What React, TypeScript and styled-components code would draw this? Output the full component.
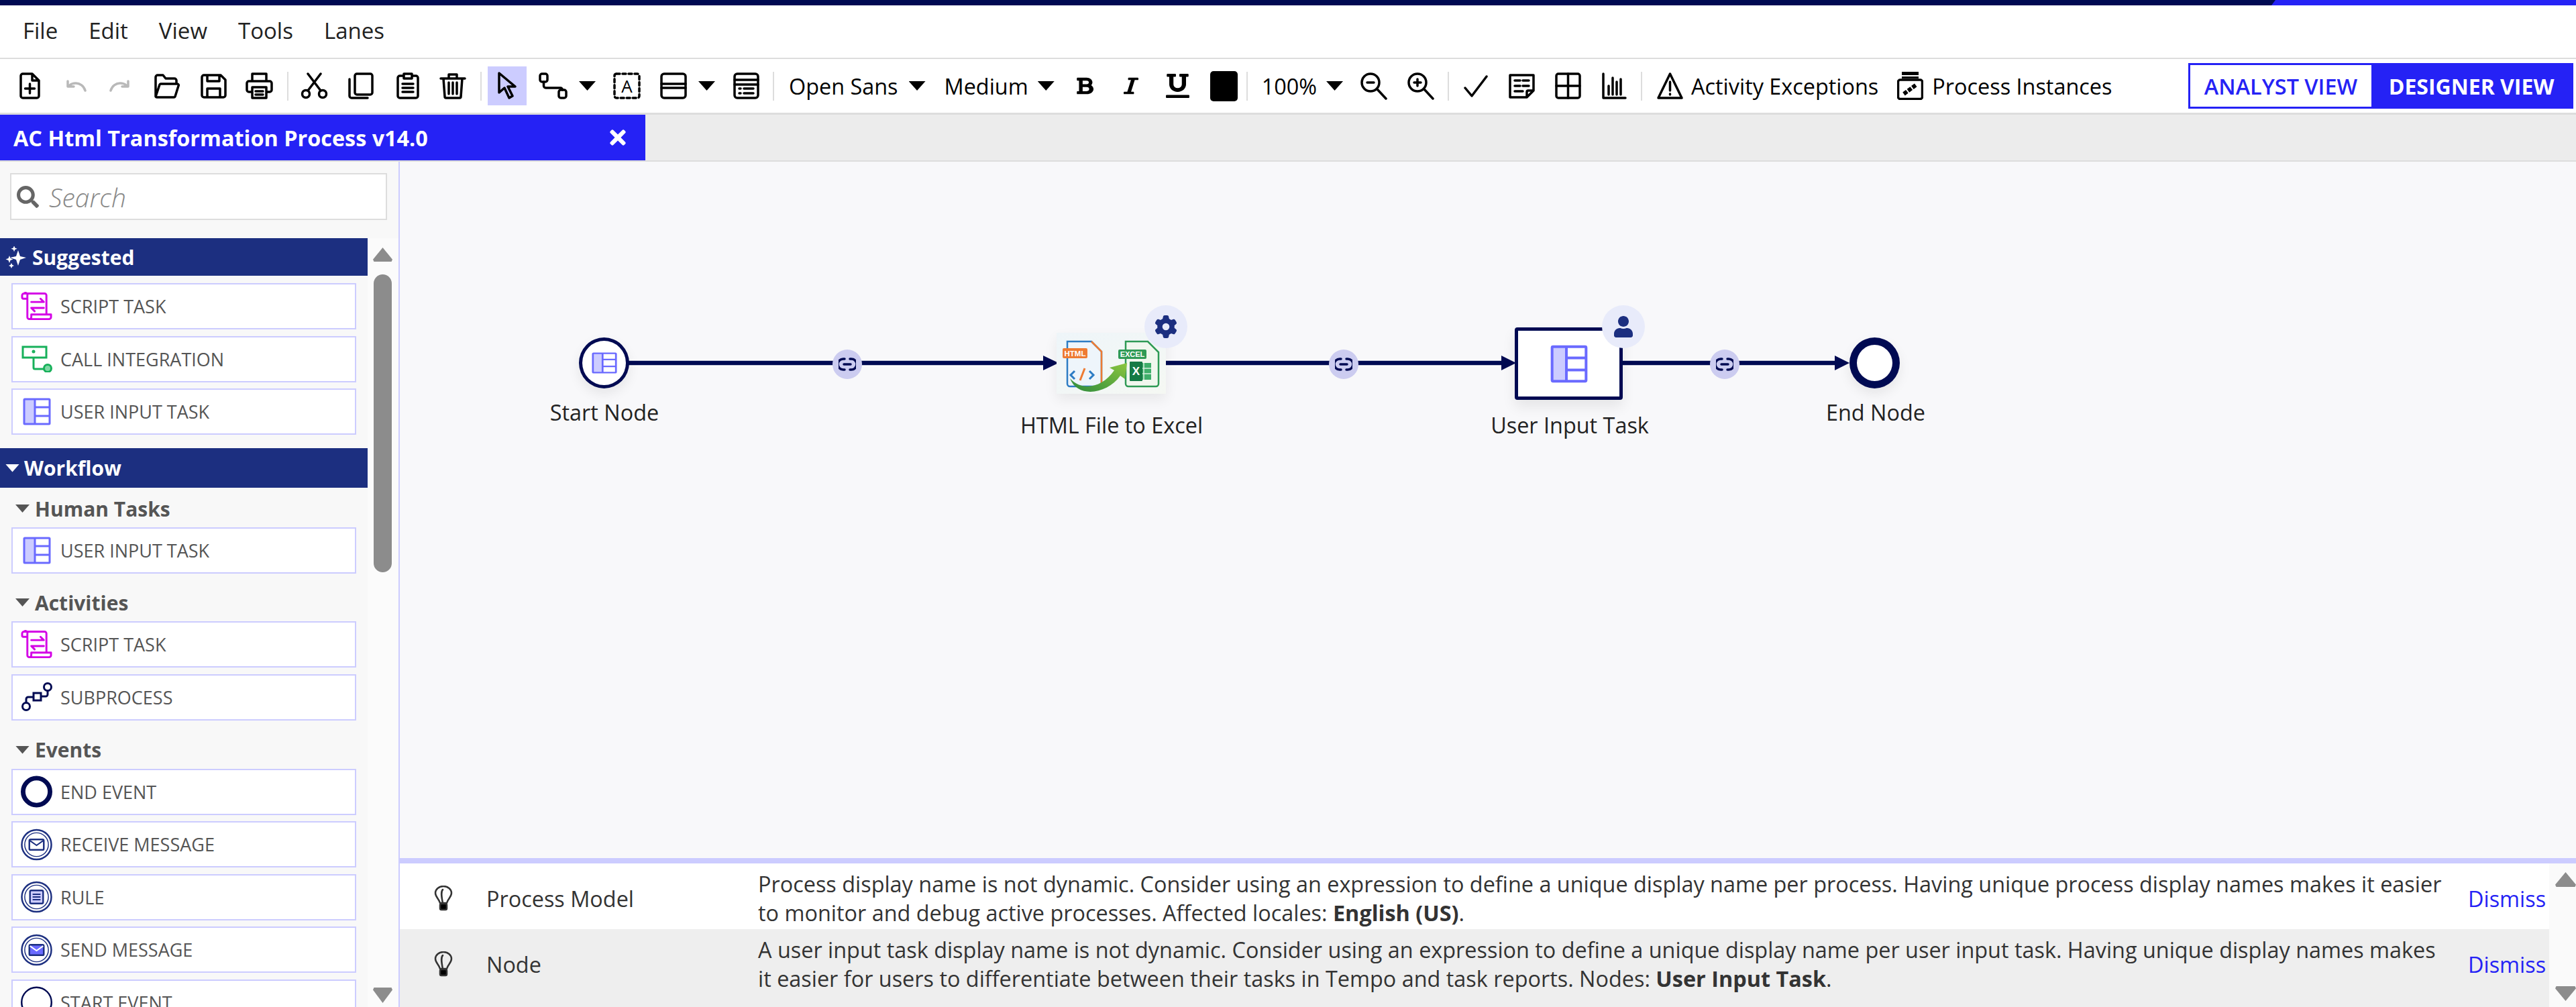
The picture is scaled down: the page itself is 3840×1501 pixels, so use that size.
import React from 'react';
import styled, { createGlobalStyle } from 'styled-components';
import { FaBold, FaItalic, FaUnderline, FaSearch, FaUser, FaTimes } from 'react-icons/fa';
import { FaGear } from 'react-icons/fa6';

const NAVY = '#000a52';
const BLUE = '#2522f5';
const SECTION = '#1c2f80';
const LILAC = '#ccccff';
const ICON_BLUE = '#6a6aff';

const GlobalStyle = createGlobalStyle`
  html, body {
    margin: 0;
    padding: 0;
    background: #fff;
    overflow: hidden;
  }
  * {
    box-sizing: border-box;
  }
`;

const Page = styled.div`
  width: 3840px;
  height: 1501px;
  display: flex;
  flex-direction: column;
  overflow: hidden;
  font-family: 'Open Sans', 'Noto Sans', sans-serif;
  font-size: 32.4px;
  color: #222;
`;

const TopStrip = styled.div`
  height: 8px;
  flex-shrink: 0;
  background: ${NAVY};
  display: flex;
  justify-content: flex-end;
`;

const TopAccent = styled.div`
  width: 454px;
  background: ${BLUE};
  clip-path: polygon(6px 0, 100% 0, 100% 100%, 0 100%);
`;

const MenuBar = styled.div`
  height: 80px;
  flex-shrink: 0;
  display: flex;
  align-items: center;
  gap: 46px;
  padding: 0 0 3px 34px;
  background: #fff;
  border-bottom: 2px solid #ddd;
  font-size: 33px;
`;

const Toolbar = styled.div`
  height: 83px;
  flex-shrink: 0;
  display: flex;
  align-items: center;
  padding: 0 4px 0 29px;
  background: #fff;
  border-bottom: 3px solid #ddd;
`;

const Tool = styled.div<{ $gap?: number; $muted?: boolean }>`
  display: flex;
  align-items: center;
  justify-content: center;
  flex-shrink: 0;
  margin-left: ${(p) => p.$gap ?? 0}px;
  color: ${(p) => (p.$muted ? '#b9b9b9' : '#000')};
  white-space: nowrap;
`;

const SelectedTool = styled(Tool)`
  width: 58px;
  height: 58px;
  background: ${LILAC};
`;

const Divider = styled.div<{ $gap: number }>`
  width: 2px;
  height: 43px;
  flex-shrink: 0;
  margin-left: ${(p) => p.$gap}px;
  background: #ddd;
`;

const Caret = styled.div<{ $gap: number }>`
  width: 25px;
  height: 14px;
  flex-shrink: 0;
  margin-left: ${(p) => p.$gap}px;
  background: #000;
  clip-path: polygon(0 0, 100% 0, 50% 100%);
`;

const Swatch = styled.div<{ $gap: number }>`
  width: 41px;
  height: 45px;
  flex-shrink: 0;
  margin-left: ${(p) => p.$gap}px;
  border-radius: 5px;
  background: #000;
`;

const BoldGlyph = styled(FaBold)`
  width: 26px;
  height: 28px;
`;

const ItalicGlyph = styled(FaItalic)`
  width: 22px;
  height: 28px;
`;

const UnderlineGlyph = styled(FaUnderline)`
  width: 35px;
  height: 36px;
`;

const ViewToggle = styled.div`
  margin-left: auto;
  width: 574px;
  height: 68px;
  display: flex;
  border: 3px solid ${BLUE};
`;

const ViewOption = styled.div<{ $active?: boolean }>`
  flex: ${(p) => (p.$active ? '0 0 298px' : '1')};
  display: flex;
  align-items: center;
  justify-content: center;
  font-size: ${(p) => (p.$active ? 32 : 32.4)}px;
  font-weight: ${(p) => (p.$active ? 700 : 600)};
  background: ${(p) => (p.$active ? BLUE : '#fff')};
  color: ${(p) => (p.$active ? '#fff' : BLUE)};
`;

const TabRow = styled.div`
  height: 70px;
  flex-shrink: 0;
  background: #ececec;
  border-bottom: 2px solid #ddd;
`;

const Tab = styled.div`
  width: 962px;
  height: 68px;
  display: flex;
  align-items: center;
  justify-content: space-between;
  padding: 0 24px 0 20px;
  background: ${BLUE};
  color: #fff;
  font-weight: 700;
`;

const Main = styled.div`
  flex: 1;
  min-height: 0;
  display: flex;
`;

const Sidebar = styled.div`
  width: 596px;
  flex-shrink: 0;
  display: flex;
  flex-direction: column;
  background: #f8f8f8;
  border-right: 2px solid ${LILAC};
  overflow: hidden;
`;

const SearchWrap = styled.div`
  padding: 17px 17px 27px 15px;
  flex-shrink: 0;
`;

const SearchBox = styled.div`
  height: 70px;
  display: flex;
  align-items: center;
  gap: 15px;
  padding-left: 8px;
  background: #fff;
  border: 2px solid #ddd;
  color: #666;
`;

const SearchText = styled.span`
  font-size: 39px;
  font-style: italic;
  font-weight: 300;
  color: #888;
`;

const SideBody = styled.div`
  flex: 1;
  min-height: 0;
  display: flex;
`;

const Palette = styled.div`
  width: 548px;
  flex-shrink: 0;
`;

const SectionHeader = styled.div<{ $tall?: boolean; $top?: number }>`
  height: ${(p) => (p.$tall ? 59 : 56)}px;
  margin-top: ${(p) => p.$top ?? 0}px;
  display: flex;
  align-items: center;
  gap: 7px;
  padding-left: 8px;
  background: ${SECTION};
  color: #fff;
  font-size: 30px;
  font-weight: 700;
`;

const SectionCaret = styled.div<{ $dark?: boolean }>`
  width: 21px;
  height: 12px;
  flex-shrink: 0;
  background: ${(p) => (p.$dark ? '#555' : '#fff')};
  clip-path: polygon(0 0, 100% 0, 50% 100%);
`;

const GroupTitle = styled.div<{ $top: number }>`
  height: 50px;
  margin: ${(p) => p.$top}px 0 3px;
  display: flex;
  align-items: center;
  gap: 8px;
  padding-left: 23px;
  font-size: 30px;
  font-weight: 700;
  color: #555;
`;

const ItemList = styled.div<{ $top?: number }>`
  display: flex;
  flex-direction: column;
  gap: 9.5px;
  padding: ${(p) => p.$top ?? 0}px 17px 0;
`;

const PaletteItem = styled.div`
  height: 69px;
  flex-shrink: 0;
  display: flex;
  align-items: center;
  gap: 12px;
  padding-left: 12px;
  background: #fff;
  border: 2px solid ${LILAC};
  font-size: 27px;
  color: #555;
`;

const ItemIcon = styled.div`
  width: 47px;
  flex-shrink: 0;
  display: flex;
  justify-content: center;
`;

const Rail = styled.div`
  flex: 1;
  position: relative;
  background: #fbfbfb;
`;

const RailUp = styled.div`
  position: absolute;
  left: 8px;
  top: 14px;
  width: 29px;
  height: 21px;
  background: #8c8c8c;
  clip-path: polygon(50% 0, 100% 85%, 95% 100%, 5% 100%, 0 85%);
`;

const RailThumb = styled.div`
  position: absolute;
  left: 9px;
  top: 54px;
  width: 27px;
  height: 444px;
  border-radius: 14px;
  background: #8c8c8c;
`;

const RailDown = styled.div`
  position: absolute;
  left: 8px;
  top: 1117px;
  width: 29px;
  height: 23px;
  background: #8c8c8c;
  clip-path: polygon(5% 0, 95% 0, 100% 15%, 50% 100%, 0 15%);
`;

const Content = styled.div`
  flex: 1;
  min-width: 0;
  display: flex;
  flex-direction: column;
`;

const Canvas = styled.div`
  flex: 1;
  position: relative;
  background: #f8f8fa;
  overflow: hidden;
`;

const Wires = styled.svg`
  position: absolute;
  left: 0;
  top: 0;
`;

const EventNode = styled.div<{ $x: number; $y: number; $ring: number }>`
  position: absolute;
  left: ${(p) => p.$x}px;
  top: ${(p) => p.$y}px;
  width: 75px;
  height: 76px;
  display: flex;
  align-items: center;
  justify-content: center;
  background: #fff;
  border: ${(p) => p.$ring}px solid ${NAVY};
  border-radius: 50%;
  box-shadow: 0 8px 18px rgba(0, 0, 0, 0.08);
`;

const TaskNode = styled.div<{ $x: number; $y: number }>`
  position: absolute;
  left: ${(p) => p.$x}px;
  top: ${(p) => p.$y}px;
  width: 161px;
  height: 108px;
  display: flex;
  align-items: center;
  justify-content: center;
  background: #fff;
  border: 5px solid ${NAVY};
  border-radius: 4px;
  box-shadow: 0 10px 20px rgba(0, 0, 0, 0.08);
`;

const PictureNode = styled.div<{ $x: number; $y: number }>`
  position: absolute;
  left: ${(p) => p.$x}px;
  top: ${(p) => p.$y}px;
  width: 163px;
  height: 91px;
  box-shadow: 0 8px 18px rgba(0, 0, 0, 0.07);
`;

const Badge = styled.div<{ $x: number; $y: number }>`
  position: absolute;
  left: ${(p) => p.$x}px;
  top: ${(p) => p.$y}px;
  width: 64px;
  height: 64px;
  display: flex;
  align-items: center;
  justify-content: center;
  border-radius: 50%;
  background: #e8ebfa;
  color: ${SECTION};
`;

const LinkChip = styled.div<{ $x: number }>`
  position: absolute;
  left: ${(p) => p.$x}px;
  top: 280px;
  width: 44px;
  height: 44px;
  display: flex;
  align-items: center;
  justify-content: center;
  border-radius: 50%;
  background: #ccccf0;
`;

const NodeLabel = styled.div<{ $x: number; $y: number }>`
  position: absolute;
  left: ${(p) => p.$x}px;
  top: ${(p) => p.$y}px;
  transform: translateX(-50%);
  line-height: 44px;
  white-space: nowrap;
`;

const Panel = styled.div`
  height: 222px;
  flex-shrink: 0;
  display: flex;
  border-top: 8px solid ${LILAC};
  overflow: hidden;
`;

const PanelRows = styled.div`
  flex: 1;
  min-width: 0;
`;

const PanelRow = styled.div<{ $shaded?: boolean; $height: number }>`
  height: ${(p) => p.$height}px;
  display: flex;
  align-items: flex-start;
  padding-top: 9px;
  background: ${(p) => (p.$shaded ? '#eee' : '#fff')};
  color: #333;
`;

const Bulb = styled.div`
  width: 129px;
  height: 86px;
  flex-shrink: 0;
  padding-left: 51px;
  display: flex;
  align-items: center;
`;

const Kind = styled.div`
  width: 405px;
  flex-shrink: 0;
  line-height: 86px;
`;

const Message = styled.div`
  width: 2520px;
  margin-right: 29px;
  flex-shrink: 0;
  line-height: 43px;
`;

const Dismiss = styled.div`
  line-height: 86px;
  color: ${BLUE};
`;

const PanelRail = styled.div`
  width: 40px;
  flex-shrink: 0;
  position: relative;
  background: #fafafa;
`;

const PanelRailUp = styled(RailUp)`
  left: 9px;
  top: 13px;
  width: 31px;
  height: 22px;
`;

const PanelRailDown = styled(RailDown)`
  left: 9px;
  top: 183px;
  width: 31px;
  height: 22px;
`;

const Stroke = styled.svg`
  display: block;
  fill: none;
  stroke: currentColor;
  stroke-width: 3.5;
  stroke-linecap: round;
  stroke-linejoin: round;
`;

const NewIcon = () => (
  <Stroke width={31} height={40} viewBox="0 0 31 40">
    <path d="M5 2h14l10 10v23a3 3 0 0 1-3 3H5a3 3 0 0 1-3-3V5a3 3 0 0 1 3-3zM19 2v10h10M15.500 17v14M8.500 24h14" />
  </Stroke>
);

const UndoIcon = ({ flip }: { flip?: boolean }) => (
  <Stroke width={34} height={18} viewBox="0 0 34 18" transform={flip ? 'scale(-1 1)' : undefined}>
    <path d="M31 16c-2-7-8-11-14-11-4 0-7 1-9 3M5 2v8h9" />
  </Stroke>
);

const FolderIcon = () => (
  <Stroke width={38} height={37} viewBox="0 0 38 37">
    <path d="M2 33V5a3 3 0 0 1 3-3h8l4 5h13a3 3 0 0 1 3 3v5M2 34l6-18a2 2 0 0 1 2-1h24a2 2 0 0 1 2 3l-5 16a2 2 0 0 1-2 1H4a2 2 0 0 1-2-1z" />
  </Stroke>
);

const SaveIcon = () => (
  <Stroke width={39} height={37} viewBox="0 0 39 37">
    <path d="M5 2h25l7 7v23a3 3 0 0 1-3 3H5a3 3 0 0 1-3-3V5a3 3 0 0 1 3-3zM10 2v9h18V2M10 35V22h19v13" />
  </Stroke>
);

const PrintIcon = () => (
  <Stroke width={41} height={40} viewBox="0 0 41 40">
    <path d="M10 13V2h21v11M10 29H5a3 3 0 0 1-3-3V16a3 3 0 0 1 3-3h31a3 3 0 0 1 3 3v10a3 3 0 0 1-3 3h-5M10 22h21v16H10zM15 28h11M15 33h11" />
  </Stroke>
);

const CutIcon = () => (
  <Stroke width={41} height={40} viewBox="0 0 41 40">
    <circle cx="8" cy="32" r="5.500" />
    <circle cx="33" cy="32" r="5.500" />
    <path d="M11 27L30 2M30 27L11 2" />
  </Stroke>
);

const CopyIcon = () => (
  <Stroke width={38} height={40} viewBox="0 0 38 40">
    <path d="M10 30V5a3 3 0 0 1 3-3h20a3 3 0 0 1 3 3v25a3 3 0 0 1-3 3H13a3 3 0 0 1-3-3zM2 10v25a3 3 0 0 0 3 3h24" />
  </Stroke>
);

const PasteIcon = () => (
  <Stroke width={34} height={40} viewBox="0 0 34 40">
    <path d="M11 5H5a3 3 0 0 0-3 3v27a3 3 0 0 0 3 3h24a3 3 0 0 0 3-3V8a3 3 0 0 0-3-3h-6M11 2h12v7H11zM9 17h16M9 23h16M9 29h16" />
  </Stroke>
);

const TrashIcon = () => (
  <Stroke width={40} height={40} viewBox="0 0 40 40">
    <path d="M2 9h36M14 9V3h12v6M6 9l2 27a2 2 0 0 0 2 2h20a2 2 0 0 0 2-2l2-27M14 15v17M20 15v17M26 15v17" />
  </Stroke>
);

const PointerIcon = () => (
  <Stroke width={31} height={42} viewBox="0 0 31 42">
    <path d="M3 2v29l8-7 7 15 5-3-7-14h11z" />
  </Stroke>
);

const ConnectorIcon = () => (
  <Stroke width={43} height={40} viewBox="0 0 43 40">
    <rect x="2" y="2" width="11" height="12" rx="3" />
    <rect x="30" y="26" width="11" height="12" rx="3" />
    <path d="M7.500 14v6a3 3 0 0 0 3 3h22a3 3 0 0 1 3 3" />
  </Stroke>
);

const TextBoxIcon = () => (
  <Stroke width={41} height={40} viewBox="0 0 41 40">
    <rect x="2" y="2" width="37" height="36" rx="3" strokeDasharray="5 4" />
    <text x="20.500" y="30" textAnchor="middle" fontSize="26" fill="#000" stroke="none" fontFamily="Open Sans">
      A
    </text>
  </Stroke>
);

const LanesIcon = () => (
  <Stroke width={40} height={40} viewBox="0 0 40 40">
    <rect x="2" y="2" width="36" height="36" rx="4" />
    <path d="M2 17h36M2 23h36" />
  </Stroke>
);

const FormIcon = () => (
  <Stroke width={39} height={40} viewBox="0 0 39 40">
    <rect x="2" y="2" width="35" height="36" rx="4" />
    <path d="M2 11h35M2 18h35M9 24h2M16 24h14M9 31h2M16 31h14" />
  </Stroke>
);

const ZoomIcon = ({ plus }: { plus?: boolean }) => (
  <Stroke width={40} height={41} viewBox="0 0 40 41">
    <ellipse cx="15" cy="15" rx="13" ry="13" />
    <path d={plus ? 'M25 25l13 14M10 15h10M15 10v10' : 'M25 25l13 14M10 15h10'} />
  </Stroke>
);

const CheckIcon = () => (
  <Stroke width={36} height={33} viewBox="0 0 36 33">
    <path d="M2 19l10 12L34 2" />
  </Stroke>
);

const NoteIcon = () => (
  <Stroke width={39} height={37} viewBox="0 0 39 37">
    <path d="M2 2h35v23l-10 10H2zM27 35v-8a2 2 0 0 1 2-2h8M9 10h8M21 10h9M9 18h8M21 18h9M9 26h12" />
  </Stroke>
);

const GridIcon = () => (
  <Stroke width={39} height={40} viewBox="0 0 39 40">
    <rect x="2" y="2" width="35" height="36" rx="3" />
    <path d="M19.500 2v36M2 20h35" />
  </Stroke>
);

const ChartIcon = () => (
  <Stroke width={37} height={40} viewBox="0 0 37 40">
    <path d="M2 2v36h33M10 20v13M16 8v25M22 14v19M28 10v23" />
  </Stroke>
);

const WarnIcon = () => (
  <Stroke width={39} height={40} viewBox="0 0 39 40">
    <path d="M19.500 2L37 38H2zM19.500 14v13M19.500 32v1" />
  </Stroke>
);

const InstancesIcon = () => (
  <svg width="39" height="42" viewBox="0 0 39 42" style={{ display: 'block' }}>
    <rect x="7" y="0" width="25" height="5" fill="#000" />
    <rect x="7" y="7" width="25" height="3" fill="#000" />
    <rect x="1.500" y="12" width="36" height="28.500" rx="3" fill="#fff" stroke="#000" strokeWidth="3.500" />
    <path d="M10 33l19-14" stroke="#000" strokeWidth="6" strokeDasharray="6 2" />
  </svg>
);

const BulbIcon = () => (
  <Stroke width={28} height={38} viewBox="0 0 28 38" style={{ strokeWidth: 2.5 }}>
    <path d="M9 26C7 19 2 17 2 11a12 10 0 0 1 24 0c0 6-5 8-7 15zM13 6c-3 3-2 10 0 20" />
    <rect x="9" y="27" width="10" height="9" rx="2" fill="#000" />
  </Stroke>
);

const SparkleIcon = () => (
  <svg width="33" height="33" viewBox="0 0 33 33" fill="#fff" style={{ display: 'block' }}>
    <path d="M19 6l3 9 9 2-9 3-3 9-3-9-9-3 9-2z" />
    <path d="M13 0l1.500 4 4 1.500-4 1.500-1.500 4-1.500-4-4-1.500 4-1.500z" transform="translate(2 -1) scale(.85)" />
    <path d="M8 12l1.500 4 4 1.500-4 1.500L8 23l-1.500-4-4-1.500 4-1.500z" transform="translate(-2 2)" />
    <path d="M9 25l1.300 2.700L13 29l-2.700 1.300L9 33l-1.300-2.700L5 29l2.700-1.300z" />
  </svg>
);

const ScriptIcon = () => (
  <svg width="48" height="43" viewBox="0 0 48 43" fill="none" stroke="#d400e6" strokeWidth="3" strokeLinejoin="round" strokeLinecap="round">
    <path d="M5 2h31a3 3 0 0 1 3 3v28M5 2a3 3 0 0 0-3 3v3a2 2 0 0 0 2 2h6V5a3 3 0 0 0-5-3zM10 10v28a3 3 0 0 0 6 0v-4h30v4a3 3 0 0 1-3 3H13" />
    <path d="M16 15h19l-5-5M35 24H16l5 5" />
  </svg>
);

const IntegrationIcon = () => (
  <svg width="46" height="40" viewBox="0 0 46 40" fill="none" stroke="#17b05a" strokeWidth="3">
    <rect x="2" y="2" width="35" height="16" />
    <circle cx="18" cy="9" r="1" fill="#17b05a" />
    <path d="M18 18v15a2 2 0 0 0 2 2h14" />
    <circle cx="39" cy="34" r="5.500" fill="#7fd8a5" />
  </svg>
);

const InputIcon = ({ w = 42, h = 41 }: { w?: number; h?: number }) => (
  <svg width={w} height={h} viewBox="0 0 42 41" preserveAspectRatio="none" fill="none">
    <rect x="2" y="2" width="16" height="37" fill={LILAC} />
    <rect x="2" y="2" width="38" height="37" stroke={ICON_BLUE} strokeWidth="3" rx="1" />
    <path d="M18 2v37M18 14h22M18 27h22" stroke={ICON_BLUE} strokeWidth="3" />
  </svg>
);

const SubprocessIcon = () => (
  <svg width="46" height="44" viewBox="0 0 46 44" fill="none" stroke={NAVY} strokeWidth="3">
    <circle cx="7" cy="36" r="5.500" />
    <path d="M7 30v-5a3 3 0 0 1 3-3h8" />
    <rect x="18" y="16" width="11" height="11" />
    <path d="M29 21h7a3 3 0 0 0 3-3v-5" />
    <circle cx="39" cy="7" r="5.500" />
  </svg>
);

const RingIcon = ({ children }: { children?: React.ReactNode }) => (
  <svg width="48" height="48" viewBox="0 0 48 48" fill="none" stroke={SECTION}>
    <circle cx="24" cy="24" r="22.500" strokeWidth="2.500" />
    <circle cx="24" cy="24" r="18" strokeWidth="1.500" />
    {children}
  </svg>
);

const PlainRing = ({ width }: { width: number }) => (
  <svg width="48" height="48" viewBox="0 0 48 48" fill="none" stroke={NAVY}>
    <circle cx="24" cy="24" r={24 - width / 2} strokeWidth={width} />
  </svg>
);

const LinkGlyph = () => (
  <svg width="26" height="22" viewBox="0 0 26 22" fill="none" stroke={NAVY} strokeWidth="3.500" strokeLinecap="round">
    <path d="M9 3H7a8 8 0 0 0 0 16h2M17 3h2a8 8 0 0 1 0 16h-2M8 11h10" />
  </svg>
);

const HtmlToExcel = () => (
  <svg width="163" height="91" viewBox="0 0 163 91" style={{ display: 'block' }}>
    <defs>
      <linearGradient id="pic" x1="0" y1="0" x2="1" y2="1">
        <stop offset="0" stopColor="#eef5f9" />
        <stop offset="1" stopColor="#f5f8f3" />
      </linearGradient>
      <linearGradient id="swoosh" x1="0" y1="1" x2="1" y2="0">
        <stop offset="0" stopColor="#2e8b3d" />
        <stop offset="1" stopColor="#8cc63f" />
      </linearGradient>
    </defs>
    <rect width="163" height="91" fill="url(#pic)" />
    <path d="M16 13h36l15 15v52H20a4 4 0 0 1-4-4z" fill="#eef5fb" stroke="#2d7cc4" strokeWidth="2.500" />
    <path d="M52 13l15 15v52" fill="none" stroke="#ee7b32" strokeWidth="2.500" />
    <rect x="9" y="23" width="37" height="15" rx="2" fill="#ee7b32" />
    <text x="27.500" y="35" fontFamily="Liberation Sans" fontSize="11.500" fontWeight="700" fill="#fff" textAnchor="middle">
      HTML
    </text>
    <path d="M27 57l-6 6 6 6M49 57l6 6-6 6" fill="none" stroke="#2d7cc4" strokeWidth="3" />
    <path d="M42 53l-7 18" stroke="#ee7b32" strokeWidth="3" />
    <path d="M103 13h33l16 16v47a4 4 0 0 1-4 4h-41a4 4 0 0 1-4-4z" fill="#f1f7ee" stroke="#2f9a55" strokeWidth="2.500" />
    <rect x="92" y="25" width="42" height="14" rx="2" fill="#2f9a55" />
    <text x="113" y="36" fontFamily="Liberation Sans" fontSize="11" fontWeight="700" fill="#fff" textAnchor="middle">
      EXCEL
    </text>
    <rect x="118" y="45" width="23" height="25" fill="#3fae6a" />
    <path d="M118 53h23M118 61h23M130 45v25" stroke="#d7efe0" strokeWidth="1.500" />
    <rect x="109" y="43" width="19" height="29" rx="1" fill="#157a45" />
    <text x="118.500" y="63" fontFamily="Liberation Sans" fontSize="17" fontWeight="700" fill="#fff" textAnchor="middle">
      X
    </text>
    <path d="M20 68c18 20 48 14 66-12l-7-4 26-7-3 24-7-5c-20 28-64 34-75 4z" fill="url(#swoosh)" />
  </svg>
);

const App: React.FC = () => {
  return (
    <Page>
      <GlobalStyle />
      <TopStrip>
        <TopAccent />
      </TopStrip>
      <MenuBar>
        <span>File</span>
        <span>Edit</span>
        <span>View</span>
        <span>Tools</span>
        <span>Lanes</span>
      </MenuBar>
      <Toolbar>
        <Tool><NewIcon /></Tool>
        <Tool $gap={36} $muted><UndoIcon /></Tool>
        <Tool $gap={32} $muted><UndoIcon flip /></Tool>
        <Tool $gap={34}><FolderIcon /></Tool>
        <Tool $gap={31}><SaveIcon /></Tool>
        <Tool $gap={28}><PrintIcon /></Tool>
        <Divider $gap={21} />
        <Tool $gap={18}><CutIcon /></Tool>
        <Tool $gap={30}><CopyIcon /></Tool>
        <Tool $gap={34}><PasteIcon /></Tool>
        <Tool $gap={30}><TrashIcon /></Tool>
        <Divider $gap={21} />
        <SelectedTool $gap={9}><PointerIcon /></SelectedTool>
        <Tool $gap={18}><ConnectorIcon /></Tool>
        <Caret $gap={17} />
        <Tool $gap={26}><TextBoxIcon /></Tool>
        <Tool $gap={29}><LanesIcon /></Tool>
        <Caret $gap={17} />
        <Tool $gap={27}><FormIcon /></Tool>
        <Divider $gap={20} />
        <Tool $gap={22}>Open Sans</Tool>
        <Caret $gap={16} />
        <Tool $gap={28}>Medium</Tool>
        <Caret $gap={14} />
        <Tool $gap={32}><BoldGlyph preserveAspectRatio="none" /></Tool>
        <Tool $gap={45}><ItalicGlyph preserveAspectRatio="none" /></Tool>
        <Tool $gap={41}><UnderlineGlyph preserveAspectRatio="none" /></Tool>
        <Swatch $gap={31} />
        <Divider $gap={13} />
        <Tool $gap={21}>100%</Tool>
        <Caret $gap={14} />
        <Tool $gap={26}><ZoomIcon /></Tool>
        <Tool $gap={30}><ZoomIcon plus /></Tool>
        <Divider $gap={20} />
        <Tool $gap={22}><CheckIcon /></Tool>
        <Tool $gap={31}><NoteIcon /></Tool>
        <Tool $gap={30}><GridIcon /></Tool>
        <Tool $gap={31}><ChartIcon /></Tool>
        <Divider $gap={21} />
        <Tool $gap={22}><WarnIcon /></Tool>
        <Tool $gap={12}>Activity Exceptions</Tool>
        <Tool $gap={28}><InstancesIcon /></Tool>
        <Tool $gap={13}>Process Instances</Tool>
        <ViewToggle>
          <ViewOption>ANALYST VIEW</ViewOption>
          <ViewOption $active>DESIGNER VIEW</ViewOption>
        </ViewToggle>
      </Toolbar>
      <TabRow>
        <Tab>
          <span>AC Html Transformation Process v14.0</span>
          <FaTimes size={34} />
        </Tab>
      </TabRow>
      <Main>
        <Sidebar>
          <SearchWrap>
            <SearchBox>
              <FaSearch size={33} />
              <SearchText>Search</SearchText>
            </SearchBox>
          </SearchWrap>
          <SideBody>
            <Palette>
              <SectionHeader>
                <SparkleIcon />
                Suggested
              </SectionHeader>
              <ItemList $top={11}>
                <PaletteItem><ItemIcon><ScriptIcon /></ItemIcon>SCRIPT TASK</PaletteItem>
                <PaletteItem><ItemIcon><IntegrationIcon /></ItemIcon>CALL INTEGRATION</PaletteItem>
                <PaletteItem><ItemIcon><InputIcon /></ItemIcon>USER INPUT TASK</PaletteItem>
              </ItemList>
              <SectionHeader $tall $top={20}>
                <SectionCaret />
                Workflow
              </SectionHeader>
              <GroupTitle $top={6}><SectionCaret $dark />Human Tasks</GroupTitle>
              <ItemList>
                <PaletteItem><ItemIcon><InputIcon /></ItemIcon>USER INPUT TASK</PaletteItem>
              </ItemList>
              <GroupTitle $top={18}><SectionCaret $dark />Activities</GroupTitle>
              <ItemList>
                <PaletteItem><ItemIcon><ScriptIcon /></ItemIcon>SCRIPT TASK</PaletteItem>
                <PaletteItem><ItemIcon><SubprocessIcon /></ItemIcon>SUBPROCESS</PaletteItem>
              </ItemList>
              <GroupTitle $top={19}><SectionCaret $dark />Events</GroupTitle>
              <ItemList>
                <PaletteItem><ItemIcon><PlainRing width={7} /></ItemIcon>END EVENT</PaletteItem>
                <PaletteItem>
                  <ItemIcon>
                    <RingIcon>
                      <rect x="13" y="16" width="22" height="16" rx="2" strokeWidth="2.500" />
                      <path d="M14 18l10 7 10-7" strokeWidth="2" />
                    </RingIcon>
                  </ItemIcon>
                  RECEIVE MESSAGE
                </PaletteItem>
                <PaletteItem>
                  <ItemIcon>
                    <RingIcon>
                      <rect x="14" y="14" width="20" height="20" rx="2" strokeWidth="2.500" fill={LILAC} />
                      <path d="M18 20h12M18 24h12M18 28h12" strokeWidth="2" />
                    </RingIcon>
                  </ItemIcon>
                  RULE
                </PaletteItem>
                <PaletteItem>
                  <ItemIcon>
                    <RingIcon>
                      <rect x="13" y="16" width="22" height="16" rx="2" strokeWidth="2.500" fill={ICON_BLUE} />
                      <path d="M14 18l10 7 10-7" stroke="#fff" strokeWidth="2" />
                    </RingIcon>
                  </ItemIcon>
                  SEND MESSAGE
                </PaletteItem>
                <PaletteItem><ItemIcon><PlainRing width={2.5} /></ItemIcon>START EVENT</PaletteItem>
              </ItemList>
            </Palette>
            <Rail>
              <RailUp />
              <RailThumb />
              <RailDown />
            </Rail>
          </SideBody>
        </Sidebar>
        <Content>
          <Canvas>
            <Wires width="3244" height="1040" viewBox="596 241 3244 1040">
              <path d="M936 541H1558M1738 541H2240M2419 541H2738" stroke="#fff" strokeWidth="11" />
              <path d="M936 541H1558M1738 541H2240M2419 541H2738" stroke={NAVY} strokeWidth="6.500" />
              <path d="M1555 530L1578 541L1555 552zM2238 530L2260 541L2238 552zM2735 530L2757 541L2735 552z" fill={NAVY} />
            </Wires>
            <EventNode $x={267} $y={262} $ring={5}>
              <InputIcon w={38} h={32} />
            </EventNode>
            <NodeLabel $x={305} $y={351}>Start Node</NodeLabel>
            <LinkChip $x={645}><LinkGlyph /></LinkChip>
            <PictureNode $x={979} $y={255}><HtmlToExcel /></PictureNode>
            <Badge $x={1110} $y={214}><FaGear size={34} /></Badge>
            <NodeLabel $x={1061} $y={370}>HTML File to Excel</NodeLabel>
            <LinkChip $x={1385}><LinkGlyph /></LinkChip>
            <TaskNode $x={1662} $y={247}>
              <InputIcon w={56} h={57} />
            </TaskNode>
            <Badge $x={1792} $y={214}><FaUser size={32} /></Badge>
            <NodeLabel $x={1744} $y={370}>User Input Task</NodeLabel>
            <LinkChip $x={1953}><LinkGlyph /></LinkChip>
            <EventNode $x={2161} $y={262} $ring={11} />
            <NodeLabel $x={2200} $y={351}>End Node</NodeLabel>
          </Canvas>
          <Panel>
            <PanelRows>
              <PanelRow $height={98}>
                <Bulb><BulbIcon /></Bulb>
                <Kind>Process Model</Kind>
                <Message>
                  Process display name is not dynamic. Consider using an expression to define a unique display name per process. Having unique process display names makes it easier to monitor and debug active processes. Affected locales: <b>English (US)</b>.
                </Message>
                <Dismiss>Dismiss</Dismiss>
              </PanelRow>
              <PanelRow $height={116} $shaded>
                <Bulb><BulbIcon /></Bulb>
                <Kind>Node</Kind>
                <Message>
                  A user input task display name is not dynamic. Consider using an expression to define a unique display name per user input task. Having unique display names makes it easier for users to differentiate between their tasks in Tempo and task reports. Nodes: <b>User Input Task</b>.
                </Message>
                <Dismiss>Dismiss</Dismiss>
              </PanelRow>
            </PanelRows>
            <PanelRail>
              <PanelRailUp />
              <PanelRailDown />
            </PanelRail>
          </Panel>
        </Content>
      </Main>
    </Page>
  );
};

export default App;
